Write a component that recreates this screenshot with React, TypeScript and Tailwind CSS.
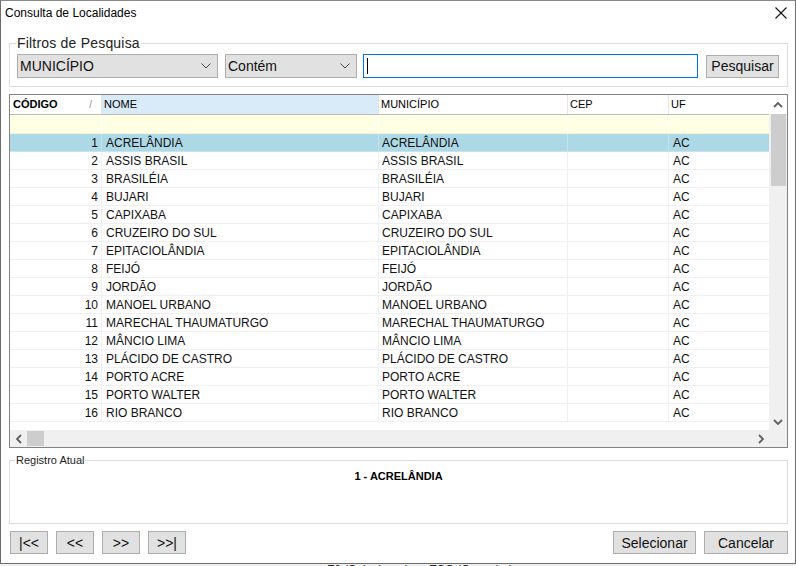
import React from "react";

const cities = [
  "ACRELÂNDIA",
  "ASSIS BRASIL",
  "BRASILÉIA",
  "BUJARI",
  "CAPIXABA",
  "CRUZEIRO DO SUL",
  "EPITACIOLÂNDIA",
  "FEIJÓ",
  "JORDÃO",
  "MANOEL URBANO",
  "MARECHAL THAUMATURGO",
  "MÂNCIO LIMA",
  "PLÁCIDO DE CASTRO",
  "PORTO ACRE",
  "PORTO WALTER",
  "RIO BRANCO",
];

const Chevron: React.FC<{ dir: "up" | "down" | "left" | "right" }> = ({ dir }) => {
  const pts = {
    up: "1,6 5,2 9,6",
    down: "1,2 5,6 9,2",
    left: "6,1 2,5 6,9",
    right: "2,1 6,5 2,9",
  }[dir];
  const vertical = dir === "up" || dir === "down";
  return (
    <svg width={vertical ? 10 : 8} height={vertical ? 8 : 10} viewBox={vertical ? "0 0 10 8" : "0 0 8 10"}>
      <polyline points={pts} fill="none" stroke="#606060" strokeWidth="1.8" />
    </svg>
  );
};

const ComboBox: React.FC<{ value: string; width: string }> = ({ value, width }) => (
  <div className={`${width} h-[24px] flex items-center justify-between bg-[#e1e1e1] border border-[#adadad] pl-[2px] pr-[6px] text-[14px] text-[#111]`}>
    <span>{value}</span>
    <svg width="10" height="6" viewBox="0 0 10 6">
      <polyline points="0.5,0.5 5,5 9.5,0.5" fill="none" stroke="#444" strokeWidth="1" />
    </svg>
  </div>
);

const Button: React.FC<{ label: string; width: string }> = ({ label, width }) => (
  <button className={`${width} h-[23px] bg-[#e1e1e1] border border-[#adadad] text-[14px] text-[#111] leading-none flex items-center justify-center`}>
    {label}
  </button>
);

export default function App() {
  return (
    <div
      className="w-[796px] h-[566px] overflow-hidden bg-[#f0f0f0] flex flex-col"
      style={{ fontFamily: '"Liberation Sans", Arial, sans-serif' }}
    >
      <div className="w-[796px] h-[564px] shrink-0 bg-white border border-[#6d6d6d] border-t-[#8a8a8a] flex flex-col pl-[8px] pr-[7px]">
        {/* title bar */}
        <div className="h-[24px] flex items-center justify-between -ml-[4px] pr-[1px]">
          <span className="text-[12px] text-black">Consulta de Localidades</span>
          <svg width="12" height="12" viewBox="0 0 12 12">
            <path d="M0.5 0.5 L11.5 11.5 M11.5 0.5 L0.5 11.5" stroke="#111" strokeWidth="1.1" />
          </svg>
        </div>

        {/* filtros */}
        <fieldset className="mt-[10px] border border-[#dcdcdc] pl-[7px] pr-[8px] pt-[3px] pb-[8px]">
          <legend className="-ml-[1px] px-[1px] text-[14px] leading-[16px] text-[#222] tracking-[0.2px]">
            Filtros de Pesquisa
          </legend>
          <div className="flex items-center">
            <ComboBox value="MUNICÍPIO" width="w-[201px]" />
            <div className="ml-[7px]">
              <ComboBox value="Contém" width="w-[132px]" />
            </div>
            <div className="ml-[6px] flex-1 h-[24px] border border-[#0078d7] bg-white flex items-center pl-[3px]">
              <div className="w-[1px] h-[16px] bg-black" />
            </div>
            <div className="ml-[8px]">
              <Button label="Pesquisar" width="w-[73px]" />
            </div>
          </div>
        </fieldset>

        {/* grade */}
        <div className="mt-[7px] h-[354px] border border-[#828282] flex flex-col">
          <div className="flex flex-1 min-h-0">
            <div className="flex-1 overflow-hidden bg-white">
              <div className="flex h-[20px] border-b border-[#bcbcbc] text-[11px] text-black">
                <div className="w-[92px] flex items-center justify-between pl-[3px] pr-[9px] border-r border-[#e5e5e5] font-bold">
                  <span>CÓDIGO</span>
                  <span className="text-[#909090] font-normal text-[10px]">/</span>
                </div>
                <div className="w-[277px] flex items-center pl-[2px] bg-[#d9ebf9] border-r border-[#e5e5e5]">NOME</div>
                <div className="w-[189px] flex items-center pl-[2px] border-r border-[#e5e5e5]">MUNICÍPIO</div>
                <div className="w-[101px] flex items-center pl-[2px] border-r border-[#e5e5e5]">CEP</div>
                <div className="w-[100px] flex items-center pl-[2px]">UF</div>
              </div>
              <div className="flex h-[19px] bg-[#ffffe4] border-b border-[#f3f3e0]">
                <div className="w-[92px] border-r border-white" />
                <div className="w-[277px] border-r border-white" />
                <div className="w-[189px] border-r border-white" />
                <div className="w-[101px] border-r border-white" />
                <div className="w-[100px]" />
              </div>
              {cities.map((city, i) => {
                const selected = i === 0;
                const sep = selected ? "border-[#c6e4ee]" : "border-[#f0f0f0]";
                return (
                  <div
                    key={city}
                    className={`flex h-[18px] text-[12px] text-[#111] border-b ${sep} ${selected ? "bg-[#add8e6]" : "bg-white"}`}
                  >
                    <div className={`w-[92px] flex items-center justify-end pr-[3px] border-r ${sep}`}>{i + 1}</div>
                    <div className={`w-[277px] flex items-center pl-[4px] border-r ${sep}`}>{city}</div>
                    <div className={`w-[189px] flex items-center pl-[3px] border-r ${sep}`}>{city}</div>
                    <div className={`w-[101px] border-r ${sep}`} />
                    <div className="w-[100px] flex items-center pl-[4px]">AC</div>
                  </div>
                );
              })}
            </div>
            {/* barra vertical */}
            <div className="w-[18px] bg-[#f0f0f0] flex flex-col items-center">
              <div className="h-[19px] w-full bg-white flex items-center justify-center">
                <Chevron dir="up" />
              </div>
              <div className="w-[15px] h-[72px] bg-[#cdcdcd]" />
              <div className="flex-1" />
              <div className="h-[17px] flex items-center justify-center">
                <Chevron dir="down" />
              </div>
            </div>
          </div>
          {/* barra horizontal */}
          <div className="h-[17px] flex bg-[#f0f0f0]">
            <div className="w-[17px] flex items-center justify-center">
              <Chevron dir="left" />
            </div>
            <div className="w-[17px] h-[15px] mt-[1px] bg-[#cdcdcd]" />
            <div className="flex-1" />
            <div className="w-[17px] flex items-center justify-center">
              <Chevron dir="right" />
            </div>
            <div className="w-[18px]" />
          </div>
        </div>

        {/* registro atual */}
        <fieldset className="mt-[6px] h-[70px] border border-[#dcdcdc]">
          <legend className="ml-[5px] px-[1px] text-[11px] leading-[13px] text-[#222]">Registro Atual</legend>
          <div className="mt-[1px] text-center text-[11px] font-bold text-black">1 - ACRELÂNDIA</div>
        </fieldset>

        {/* botões */}
        <div className="mt-[7px] flex items-center ml-[1px]">
          <div className="flex gap-[8px]">
            <Button label="|<<" width="w-[38px]" />
            <Button label="<<" width="w-[38px]" />
            <Button label=">>" width="w-[38px]" />
            <Button label=">>|" width="w-[38px]" />
          </div>
          <div className="flex-1" />
          <div className="flex gap-[8px]">
            <Button label="Selecionar" width="w-[83px]" />
            <Button label="Cancelar" width="w-[84px]" />
          </div>
        </div>
      </div>
      <div className="h-[2px] overflow-hidden pl-[327px]">
        <div className="text-[12px] leading-[12px] text-[#222] whitespace-pre">F2 (Selecionar)      ESC (Cancelar)</div>
      </div>
    </div>
  );
}
